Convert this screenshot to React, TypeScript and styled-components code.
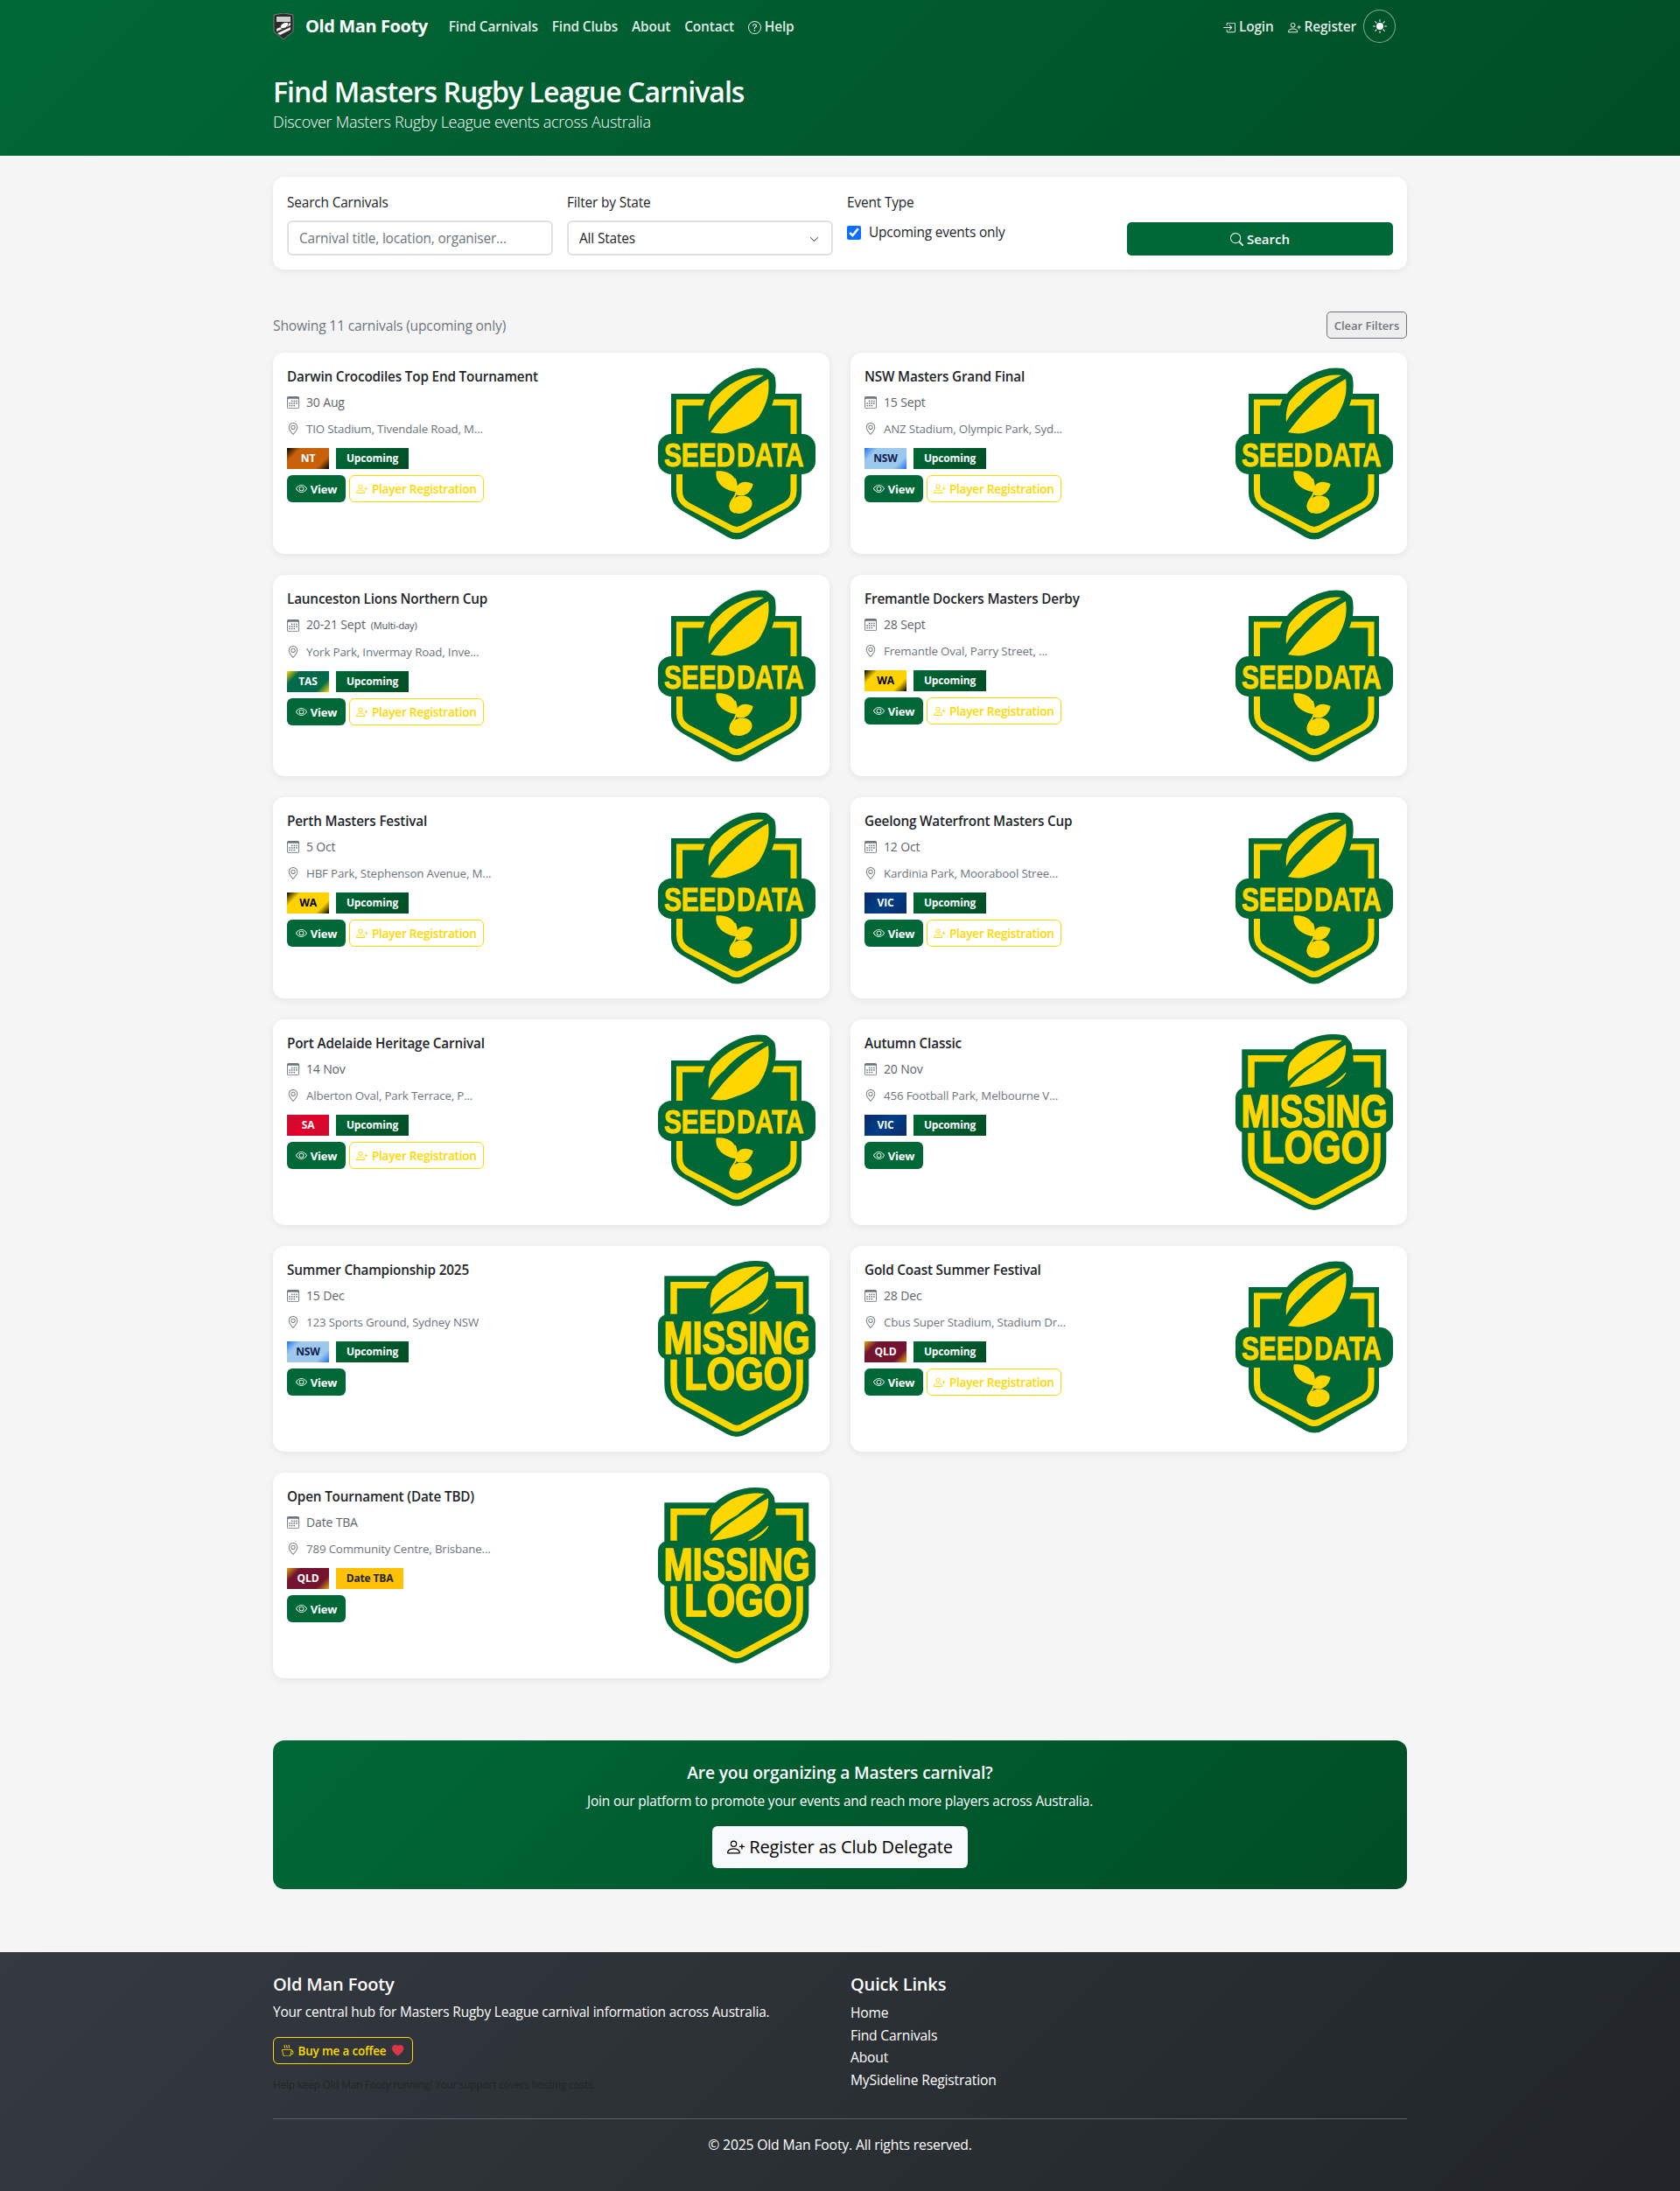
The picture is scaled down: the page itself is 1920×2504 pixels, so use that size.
import React from 'react';
import styled, { createGlobalStyle, css } from 'styled-components';
import {
  BsBoxArrowInRight,
  BsCalendar3,
  BsChevronDown,
  BsCupHot,
  BsEye,
  BsGeoAlt,
  BsHeartFill,
  BsPersonPlus,
  BsQuestionCircle,
  BsSearch,
  BsSunFill,
} from 'react-icons/bs';

const GREEN = '#006837';
const YELLOW = '#ffd700';

const GlobalStyle = createGlobalStyle`
  * { box-sizing: border-box; }
  body {
    margin: 0;
    background: #f5f5f5;
    color: #212529;
    font-family: "Open Sans", "Noto Sans", "Liberation Sans", sans-serif;
    font-size: 15.4px;
    line-height: 24px;
    letter-spacing: -0.01em;
  }
`;

const Container = styled.div`
  width: 1296px;
  margin: 0 auto;
`;

const Header = styled.header`
  height: 178px;
  background: linear-gradient(135deg, #006837 0%, #004d25 100%);
  color: #fff;
`;

const Nav = styled(Container)`
  height: 60px;
  display: flex;
  align-items: center;
`;

const Brand = styled.a`
  display: flex;
  align-items: center;
  gap: 13px;
  margin-right: 24px;
  font-size: 20px;
  font-weight: 700;
  letter-spacing: -0.02em;
`;

const NavLink = styled.a`
  display: flex;
  align-items: center;
  gap: 4px;
  margin-right: 16px;
  padding-top: 2px;
  font-size: 15.4px;
  font-weight: 600;
  color: rgba(255, 255, 255, 0.9);
  svg { font-size: 15px; }
`;

const NavRight = styled.div`
  margin-left: auto;
  display: flex;
  align-items: center;
  padding-right: 13px;
  a:last-of-type { margin-right: 8px; }
`;

const ThemeToggle = styled.button`
  width: 37px;
  height: 38px;
  border-radius: 50%;
  border: 1px solid rgba(255, 255, 255, 0.5);
  background: transparent;
  color: #fff;
  display: flex;
  align-items: center;
  justify-content: center;
  font-size: 16px;
  padding: 0;
`;

const HeroTitle = styled.h1`
  margin: 25px 0 0;
  font-size: 32px;
  line-height: 40px;
  font-weight: 600;
  letter-spacing: -0.03em;
`;

const HeroSub = styled.p`
  margin: 0;
  font-size: 18px;
  line-height: 28px;
  font-weight: 300;
  letter-spacing: -0.015em;
`;

const FilterCard = styled.form`
  margin-top: 24px;
  height: 106px;
  padding: 16px;
  background: #fff;
  border-radius: 13px;
  box-shadow: 0 2px 8px rgba(0, 0, 0, 0.07);
  display: grid;
  grid-template-columns: repeat(4, 1fr);
  column-gap: 16px;
`;

const Field = styled.div`
  display: flex;
  flex-direction: column;
  justify-content: flex-start;
`;

const FieldEnd = styled(Field)`
  justify-content: flex-end;
`;

const Label = styled.div`
  line-height: 28px;
  color: #212529;
  margin-bottom: 6px;
`;

const controlBox = css`
  height: 40px;
  width: 100%;
  border: 2px solid #dee2e6;
  border-radius: 6px;
  background: #fff;
  font: inherit;
  padding: 2px 12px 0;
`;

const SearchInput = styled.div`
  ${controlBox};
  display: flex;
  align-items: center;
  color: #6c757d;
`;

const SelectBox = styled.div`
  ${controlBox};
  display: flex;
  align-items: center;
  justify-content: space-between;
  svg { font-size: 11px; margin-right: 2px; }
`;

const CheckRow = styled.label`
  display: flex;
  align-items: center;
  gap: 9px;
  margin-top: 2px;
`;

const CheckBox = styled.input`
  width: 16px;
  height: 16px;
  margin: 0;
  accent-color: #0d6efd;
`;

const SearchButton = styled.button`
  height: 38px;
  width: 100%;
  border: 0;
  border-radius: 5px;
  background: ${GREEN};
  color: #fff;
  font: inherit;
  font-size: 15px;
  font-weight: 600;
  display: flex;
  align-items: center;
  justify-content: center;
  gap: 4px;
`;

const ResultsBar = styled.div`
  margin-top: 48px;
  height: 31px;
  display: flex;
  align-items: center;
  justify-content: space-between;
  color: #6c757d;
  font-size: 15.6px;
`;

const ClearButton = styled.button`
  width: 92px;
  height: 31px;
  padding: 0;
  border: 1px solid #6c757d;
  border-radius: 5px;
  background: #eeeeee;
  color: #6c757d;
  font: inherit;
  font-size: 13px;
  font-weight: 600;
`;

const Grid = styled.div`
  margin-top: 16px;
  display: grid;
  grid-template-columns: 1fr 1fr;
  gap: 24px;
`;

const Card = styled.article`
  background: #fff;
  border-radius: 13px;
  box-shadow: 0 2px 8px rgba(0, 0, 0, 0.07);
  padding: 16px;
  display: flex;
  justify-content: space-between;
  align-items: flex-start;
`;

const CardBody = styled.div`
  min-width: 0;
`;

const CardTitle = styled.h3`
  margin: 0 0 7px;
  font-size: 15.25px;
  line-height: 22px;
  font-weight: 600;
`;

const MetaRow = styled.div<{ $gapBelow: number }>`
  display: flex;
  align-items: center;
  gap: 8px;
  margin-bottom: ${p => p.$gapBelow}px;
  color: #6c757d;
  font-size: 13.3px;
  line-height: 24px;
  svg { font-size: 14px; flex: none; }
`;

const DateText = styled.span`
  color: #5c636a;
  font-size: 14px;
  font-weight: 500;
`;

const Small = styled.small`
  font-size: 11px;
  margin-left: 6px;
  color: #495057;
  font-weight: 500;
`;

const BadgeRow = styled.div`
  display: flex;
  gap: 8px;
  margin-bottom: 7px;
`;

const stateBackgrounds: Record<string, { bg: string; color: string }> = {
  NT: { bg: 'linear-gradient(135deg, #000 0%, #c8600a 22%, #c8600a 78%, #000 100%)', color: '#fff' },
  NSW: { bg: 'linear-gradient(135deg, #1e6ff0 0%, #9cc8ee 22%, #9cc8ee 78%, #1e6ff0 100%)', color: '#12204a' },
  TAS: { bg: 'linear-gradient(135deg, #ffd700 0%, #006b4a 22%, #006b4a 78%, #ffd700 100%)', color: '#fff' },
  WA: { bg: 'linear-gradient(135deg, #000 0%, #ffd200 22%, #ffd200 78%, #000 100%)', color: '#000' },
  VIC: { bg: 'linear-gradient(135deg, #0b2a6b 0%, #003f87 50%, #0b2a6b 100%)', color: '#fff' },
  SA: { bg: 'linear-gradient(135deg, #c8102e 0%, #e4002b 50%, #c8102e 100%)', color: '#fff' },
  QLD: { bg: 'linear-gradient(135deg, #e0a80f 0%, #73132f 22%, #73132f 78%, #e0a80f 100%)', color: '#fff' },
};

const StateBadge = styled.span<{ $state: string }>`
  width: 48px;
  height: 24px;
  display: flex;
  align-items: center;
  justify-content: center;
  font-size: 12px;
  font-weight: 700;
  background: ${p => stateBackgrounds[p.$state].bg};
  color: ${p => stateBackgrounds[p.$state].color};
`;

const StatusBadge = styled.span<{ $tba?: boolean }>`
  width: ${p => (p.$tba ? 77 : 83)}px;
  height: 24px;
  display: flex;
  align-items: center;
  justify-content: center;
  font-size: 12px;
  font-weight: 700;
  background: ${p => (p.$tba ? '#ffc107' : `linear-gradient(135deg, ${GREEN}, #004d25)`)};
  color: ${p => (p.$tba ? '#212529' : '#fff')};
`;

const ButtonRow = styled.div`
  display: flex;
  gap: 4px;
`;

const ViewButton = styled.a`
  width: 67px;
  height: 31px;
  border-radius: 6px;
  background: ${GREEN};
  color: #fff;
  font-size: 13px;
  font-weight: 700;
  display: flex;
  align-items: center;
  justify-content: center;
  gap: 4px;
`;

const RegisterButton = styled.a`
  width: 154px;
  height: 31px;
  border-radius: 6px;
  border: 1px solid ${YELLOW};
  color: ${YELLOW};
  font-size: 13.7px;
  font-weight: 600;
  display: flex;
  align-items: center;
  justify-content: center;
  gap: 4px;
  letter-spacing: -0.02em;
`;

const LogoSvg = styled.svg`
  width: 180px;
  display: block;
  flex: none;
`;

const LogoGlyphs = styled.text<{ $weight: number }>`
  font-family: "Liberation Sans", sans-serif;
  font-weight: 700;
  fill: ${YELLOW};
  stroke: ${YELLOW};
  stroke-width: ${p => p.$weight}px;
  letter-spacing: 0;
`;

const Cta = styled.section`
  margin-top: 71px;
  height: 170px;
  border-radius: 13px;
  background: linear-gradient(135deg, #006837 0%, #004d25 100%);
  color: #fff;
  text-align: center;
  padding-top: 25px;
`;

const CtaTitle = styled.h4`
  margin: 0;
  font-size: 19.2px;
  line-height: 24px;
  font-weight: 600;
`;

const CtaText = styled.p`
  margin: 9px 0 16px;
  line-height: 24px;
`;

const CtaButton = styled.a`
  width: 292px;
  height: 48px;
  margin: 0 auto;
  border-radius: 6px;
  background: #f8f9fa;
  color: #000;
  font-size: 20px;
  font-weight: 500;
  display: flex;
  align-items: center;
  justify-content: center;
  gap: 5px;
`;

const Footer = styled.footer`
  margin-top: 72px;
  height: 273px;
  padding-top: 25px;
  background: linear-gradient(135deg, #343a40 0%, #212529 100%);
  color: #fff;
`;

const FooterGrid = styled.div`
  display: grid;
  grid-template-columns: 1fr 1fr;
  column-gap: 24px;
  height: 166px;
  border-bottom: 1px solid #5c6167;
`;

const FooterTitle = styled.h5`
  margin: 0 0 8px;
  font-size: 20px;
  line-height: 24px;
  font-weight: 600;
`;

const FooterText = styled.p`
  margin: 0 0 16px;
  line-height: 24px;
`;

const CoffeeButton = styled.a`
  width: 160px;
  height: 31px;
  border: 1px solid ${YELLOW};
  border-radius: 6px;
  color: ${YELLOW};
  font-size: 13.4px;
  font-weight: 600;
  display: flex;
  align-items: center;
  justify-content: center;
  gap: 5px;
  svg:last-child { color: #dc3545; margin-left: 2px; }
`;

const HelpText = styled.p`
  margin: 11px 0 0;
  font-size: 11.75px;
  line-height: 24px;
  color: #212529;
`;

const FooterLink = styled.a`
  display: block;
  font-size: 15.6px;
  line-height: 24px;
  margin-bottom: 1.5px;
`;

const Copyright = styled.p`
  margin: 17px 0 0;
  text-align: center;
  font-size: 15.7px;
  line-height: 24px;
`;

function ClubLogo() {
  return (
    <svg width="24" height="30" viewBox="0 0 24 30">
      <path d="M1 2 L12 0 L23 2 V21 L12 30 L1 21 Z" fill="#2b2b2b" stroke="#8a8a8a" strokeWidth="0.8" />
      <rect x="4" y="4" width="16" height="6" fill="#cfcfcf" />
      <path d="M4 18 L20 11 V14 L4 21 Z M5 23 L20 16 V19 L8 25 Z" fill="#f2f2f2" />
      <ellipse cx="13" cy="14" rx="5" ry="3" transform="rotate(-30 13 14)" fill="#fff" stroke="#2b2b2b" strokeWidth="0.7" />
    </svg>
  );
}

// condensed look comes from squeezing the regular bold face horizontally
function LogoWord(props: { x: number; y: number; size: number; squeeze: number; weight: number; children: string }) {
  return (
    <LogoGlyphs
      $weight={props.weight}
      fontSize={props.size}
      transform={`translate(${props.x} ${props.y}) scale(${props.squeeze} 1)`}
    >
      {props.children}
    </LogoGlyphs>
  );
}

function SeedLogo() {
  const ball =
    'M121 10 C101 7 75 21 61 41 C56 50 56 66 59 75 C78 77 95 70 115 58 C126 38 128 26 126 14 Z';
  return (
    <LogoSvg viewBox="0 0 180 198" height={198}>
      <path d="M15 31 H164 V144 C164 154 160 160 152 165 L100 195 Q90 200 80 195 L28 165 C20 160 15 154 15 144 Z" fill={GREEN} />
      <path
        d="M24.5 80 V41 H66 M114 41 H155 V80 M24.5 118 V142 C24.5 150 27 154 33 158 L84 185 Q90 188 96 185 L146 158 C152 154 155 150 155 142 V118"
        fill="none"
        stroke={YELLOW}
        strokeWidth="7"
      />
      <path d={ball} fill={GREEN} stroke={GREEN} strokeWidth="16" strokeLinejoin="round" />
      <path d="M121 10 C101 7 75 21 61 41 C59 47 57 55 58 63 C64 52 70 47 75 43 C90 25 105 18 121 10 Z" fill={YELLOW} />
      <path d="M126 14 C128 30 125 42 115 58 C105 68 95 70 78 76 C71 77 65 76 60 75 C70 62 78 52 84 47 C98 32 112 22 126 14 Z" fill={YELLOW} />
      <rect x="0" y="77" width="180" height="46" rx="15" fill={GREEN} />
      <LogoWord x={7} y={114} size={37} squeeze={0.804} weight={1}>SEED</LogoWord>
      <LogoWord x={90} y={114} size={37} squeeze={0.788} weight={1}>DATA</LogoWord>
      <path d="M66.7 119.3 C78 118 94 124 89 143 C76 142 64 132 66.7 119.3 Z" fill={YELLOW} />
      <path d="M108.7 134.3 C100 129 88 131 89 146 C96 150 106 146 108.7 134.3 Z" fill={YELLOW} />
      <ellipse cx="94.7" cy="157.7" rx="13" ry="10" transform="rotate(-15 94.7 157.7)" fill={YELLOW} />
      <path d="M88 128 C92 140 90 146 85 152 C81 158 81 164 88 167" fill="none" stroke={YELLOW} strokeWidth="1.8" />
    </LogoSvg>
  );
}

function MissingLogo() {
  const ball =
    'M122 9 C100 5 75 14 62 33 C57 42 58 55 61 62 C85 65 105 64 122 52 C130 42 128 25 126 14 Z';
  return (
    <LogoSvg viewBox="0 0 180 203" height={203}>
      <path d="M7.3 18.3 H172.3 V142 C172.3 154 168 161 159 167 L101 199 Q90 205 79 199 L21 167 C12 161 7.3 154 7.3 142 Z" fill={GREEN} />
      <path
        d="M18 64 V28.7 H62 M120 28.7 H162 V64 M18 110 V140 C18 150 21 156 27 160 L84 191 Q90 194 96 191 L153 160 C159 156 162 150 162 140 V110"
        fill="none"
        stroke={YELLOW}
        strokeWidth="7.5"
      />
      <path d={ball} fill={GREEN} stroke={GREEN} strokeWidth="14" strokeLinejoin="round" />
      <path d="M122 8 C100 5 77 13 62 34 C60 40 59 48 60 55 C70 45 80 38 90 33 C100 24 110 16 122 8 Z" fill={YELLOW} />
      <path d="M126 13 C127 28 122 38 108 48 C92 58 76 60 61 62 C70 50 84 40 96 32 C106 25 116 19 126 13 Z" fill={YELLOW} />
      <path d="M100 64 C110 61 122 54 126 45 C118 53 110 58 100 64 Z" fill={YELLOW} stroke={YELLOW} strokeWidth="1" />
      <rect x="0" y="61.7" width="180" height="52" rx="12" fill={GREEN} />
      <LogoWord x={6.5} y={106.7} size={51} squeeze={0.776} weight={1.6}>MISSING</LogoWord>
      <LogoWord x={30} y={148} size={51} squeeze={0.82} weight={1.6}>LOGO</LogoWord>
    </LogoSvg>
  );
}

type Carnival = {
  title: string;
  date: string;
  multi?: boolean;
  location: string;
  state: string;
  tba?: boolean;
  missing?: boolean;
};

const carnivals: Carnival[] = [
  { title: 'Darwin Crocodiles Top End Tournament', date: '30 Aug', location: 'TIO Stadium, Tivendale Road, M...', state: 'NT' },
  { title: 'NSW Masters Grand Final', date: '15 Sept', location: 'ANZ Stadium, Olympic Park, Syd...', state: 'NSW' },
  { title: 'Launceston Lions Northern Cup', date: '20-21 Sept', multi: true, location: 'York Park, Invermay Road, Inve...', state: 'TAS' },
  { title: 'Fremantle Dockers Masters Derby', date: '28 Sept', location: 'Fremantle Oval, Parry Street, ...', state: 'WA' },
  { title: 'Perth Masters Festival', date: '5 Oct', location: 'HBF Park, Stephenson Avenue, M...', state: 'WA' },
  { title: 'Geelong Waterfront Masters Cup', date: '12 Oct', location: 'Kardinia Park, Moorabool Stree...', state: 'VIC' },
  { title: 'Port Adelaide Heritage Carnival', date: '14 Nov', location: 'Alberton Oval, Park Terrace, P...', state: 'SA' },
  { title: 'Autumn Classic', date: '20 Nov', location: '456 Football Park, Melbourne V...', state: 'VIC', missing: true },
  { title: 'Summer Championship 2025', date: '15 Dec', location: '123 Sports Ground, Sydney NSW', state: 'NSW', missing: true },
  { title: 'Gold Coast Summer Festival', date: '28 Dec', location: 'Cbus Super Stadium, Stadium Dr...', state: 'QLD' },
  { title: 'Open Tournament (Date TBD)', date: 'Date TBA', location: '789 Community Centre, Brisbane...', state: 'QLD', tba: true, missing: true },
];

function CarnivalCard({ carnival }: { carnival: Carnival }) {
  return (
    <Card>
      <CardBody>
        <CardTitle>{carnival.title}</CardTitle>
        <MetaRow $gapBelow={6}>
          <BsCalendar3 />
          <DateText>
            {carnival.date}
            {carnival.multi && <Small>(Multi-day)</Small>}
          </DateText>
        </MetaRow>
        <MetaRow $gapBelow={10}>
          <BsGeoAlt />
          <span>{carnival.location}</span>
        </MetaRow>
        <BadgeRow>
          <StateBadge $state={carnival.state}>{carnival.state}</StateBadge>
          <StatusBadge $tba={carnival.tba}>{carnival.tba ? 'Date TBA' : 'Upcoming'}</StatusBadge>
        </BadgeRow>
        <ButtonRow>
          <ViewButton>
            <BsEye /> View
          </ViewButton>
          {!carnival.missing && (
            <RegisterButton>
              <BsPersonPlus /> Player Registration
            </RegisterButton>
          )}
        </ButtonRow>
      </CardBody>
      {carnival.missing ? <MissingLogo /> : <SeedLogo />}
    </Card>
  );
}

export default function App() {
  return (
    <>
      <GlobalStyle />
      <Header>
        <Nav>
          <Brand>
            <ClubLogo />
            Old Man Footy
          </Brand>
          <NavLink>Find Carnivals</NavLink>
          <NavLink>Find Clubs</NavLink>
          <NavLink>About</NavLink>
          <NavLink>Contact</NavLink>
          <NavLink>
            <BsQuestionCircle /> Help
          </NavLink>
          <NavRight>
            <NavLink>
              <BsBoxArrowInRight /> Login
            </NavLink>
            <NavLink>
              <BsPersonPlus /> Register
            </NavLink>
            <ThemeToggle>
              <BsSunFill />
            </ThemeToggle>
          </NavRight>
        </Nav>
        <Container>
          <HeroTitle>Find Masters Rugby League Carnivals</HeroTitle>
          <HeroSub>Discover Masters Rugby League events across Australia</HeroSub>
        </Container>
      </Header>
      <Container>
        <FilterCard>
          <Field>
            <Label>Search Carnivals</Label>
            <SearchInput>Carnival title, location, organiser...</SearchInput>
          </Field>
          <Field>
            <Label>Filter by State</Label>
            <SelectBox>
              All States
              <BsChevronDown />
            </SelectBox>
          </Field>
          <Field>
            <Label>Event Type</Label>
            <CheckRow>
              <CheckBox type="checkbox" defaultChecked />
              Upcoming events only
            </CheckRow>
          </Field>
          <FieldEnd>
            <SearchButton type="button">
              <BsSearch /> Search
            </SearchButton>
          </FieldEnd>
        </FilterCard>
        <ResultsBar>
          <span>Showing 11 carnivals (upcoming only)</span>
          <ClearButton type="button">Clear Filters</ClearButton>
        </ResultsBar>
        <Grid>
          {carnivals.map(c => (
            <CarnivalCard key={c.title} carnival={c} />
          ))}
        </Grid>
        <Cta>
          <CtaTitle>Are you organizing a Masters carnival?</CtaTitle>
          <CtaText>Join our platform to promote your events and reach more players across Australia.</CtaText>
          <CtaButton>
            <BsPersonPlus /> Register as Club Delegate
          </CtaButton>
        </Cta>
      </Container>
      <Footer>
        <Container>
          <FooterGrid>
            <div>
              <FooterTitle>Old Man Footy</FooterTitle>
              <FooterText>Your central hub for Masters Rugby League carnival information across Australia.</FooterText>
              <CoffeeButton>
                <BsCupHot /> Buy me a coffee <BsHeartFill />
              </CoffeeButton>
              <HelpText>Help keep Old Man Footy running! Your support covers hosting costs.</HelpText>
            </div>
            <div>
              <FooterTitle>Quick Links</FooterTitle>
              <FooterLink>Home</FooterLink>
              <FooterLink>Find Carnivals</FooterLink>
              <FooterLink>About</FooterLink>
              <FooterLink>MySideline Registration</FooterLink>
            </div>
          </FooterGrid>
          <Copyright>© 2025 Old Man Footy. All rights reserved.</Copyright>
        </Container>
      </Footer>
    </>
  );
}
